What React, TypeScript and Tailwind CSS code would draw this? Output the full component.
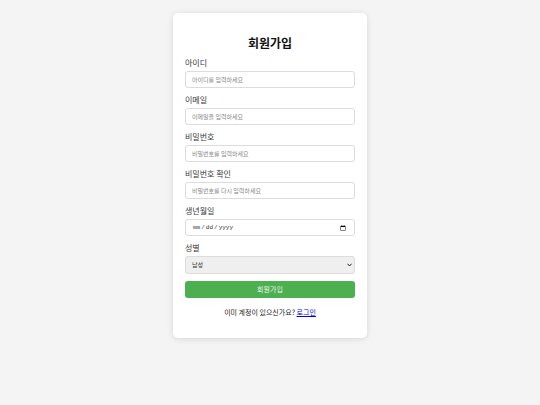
// Sign-up form card

const font = "font-['Noto_Sans_CJK_KR','Noto_Sans',sans-serif]";

function Field({ label, placeholder, type = "text" }: { label: string; placeholder?: string; type?: string }) {
  return (
    <div className="mb-[7px] flex flex-col">
      <label className="mb-[3px] text-[8px] leading-[10px] text-[#3a3a3a]">{label}</label>
      <input
        type={type}
        placeholder={placeholder}
        className="h-[17px] rounded-[3px] border border-[#dcdcdc] bg-white px-[6px] text-[6px] text-[#333] placeholder:text-[#888] outline-none"
      />
    </div>
  );
}

export default function App() {
  return (
    <div className={`min-h-[405px] w-full bg-[#f4f4f4] pt-[13px] ${font}`}>
      <div className="mx-auto w-[194px] rounded-[5px] bg-white px-[12px] pb-[20px] pt-[21px] shadow-[0_1px_6px_rgba(0,0,0,0.12)]">
        <h2 className="mb-[6px] text-center text-[12px] font-bold leading-[18px] text-[#111]">회원가입</h2>
        <Field label="아이디" placeholder="아이디를 입력하세요" />
        <Field label="이메일" placeholder="이메일을 입력하세요" />
        <Field label="비밀번호" placeholder="비밀번호를 입력하세요" type="password" />
        <Field label="비밀번호 확인" placeholder="비밀번호를 다시 입력하세요" type="password" />
        <div className="mb-[7px] flex flex-col">
          <label className="mb-[3px] text-[8px] leading-[10px] text-[#3a3a3a]">생년월일</label>
          <input
            type="date"
            className="h-[17px] rounded-[3px] border border-[#dcdcdc] bg-white px-[6px] font-['Liberation_Mono',monospace] text-[6px] text-[#333] outline-none"
          />
        </div>
        <div className="mb-[7px] flex flex-col">
          <label className="mb-[3px] text-[8px] leading-[10px] text-[#3a3a3a]">성별</label>
          <div className="relative h-[18px]">
            <select className="block h-[18px] w-full appearance-none rounded-[3px] border border-[#dcdcdc] bg-[#efefef] px-[6px] py-0 text-[6px] leading-[16px] text-[#333] outline-none">
              <option>남성</option>
              <option>여성</option>
            </select>
            <svg className="pointer-events-none absolute right-[3px] top-[7px] h-[4px] w-[5px]" viewBox="0 0 10 8">
              <path d="M1 1.5 L5 6 L9 1.5" fill="none" stroke="#222" strokeWidth="2" />
            </svg>
          </div>
        </div>
        <button className="block h-[17px] w-full rounded-[3px] bg-[#4caf50] text-[7px] leading-[17px] text-[#e8f5e9]">회원가입</button>
        <p className="mt-[8px] text-center text-[7px] leading-[12px] text-[#222]">
          이미 계정이 있으신가요? <a className="text-[#0000ee] underline">로그인</a>
        </p>
      </div>
    </div>
  );
}
